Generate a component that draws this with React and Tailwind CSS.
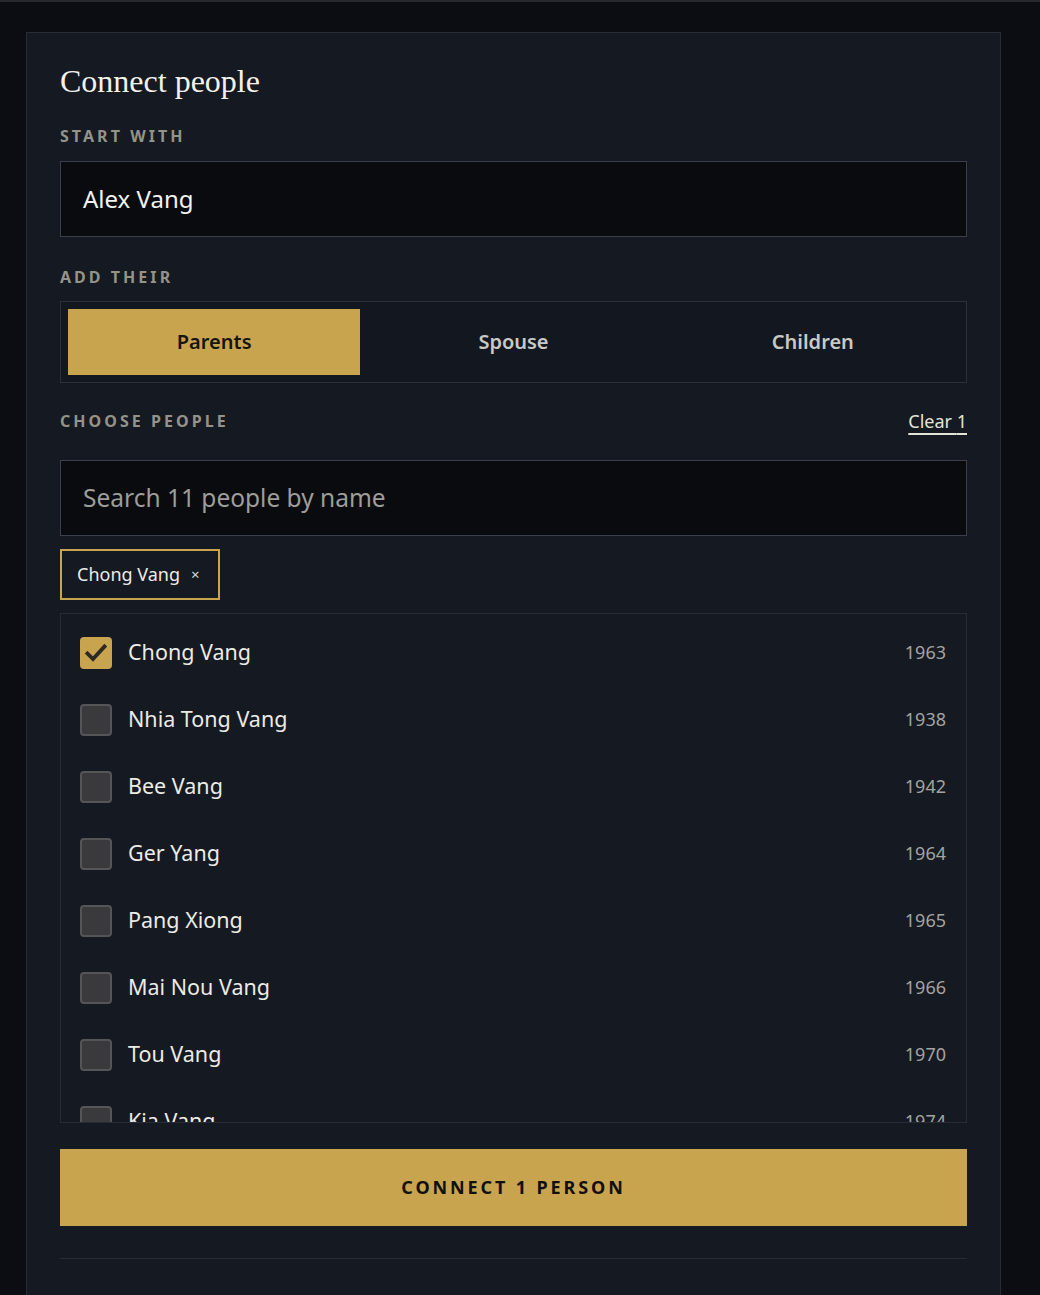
import { useState } from "react";

const people = [
    { name: "Chong Vang", year: 1963 },
    { name: "Nhia Tong Vang", year: 1938 },
    { name: "Bee Vang", year: 1942 },
    { name: "Ger Yang", year: 1964 },
    { name: "Pang Xiong", year: 1965 },
    { name: "Mai Nou Vang", year: 1966 },
    { name: "Tou Vang", year: 1970 },
    { name: "Kia Vang", year: 1974 },
    { name: "Yer Vang", year: 1976 },
];

const sans = "font-['Noto_Sans','Open_Sans',sans-serif]";

export default function App() {
    const [tab, setTab] = useState("Parents");
    const [picked, setPicked] = useState(["Chong Vang"]);

    const toggle = (name) =>
        setPicked((p) => (p.includes(name) ? p.filter((n) => n !== name) : [...p, name]));

    return (
        <div className={`min-h-[1295px] bg-[#0b0d13] border-t-2 border-[#26282d] pt-[30px] px-[26px] ${sans}`}>
            <div className="w-[975px] bg-[#151922] border border-[#272c36] border-b-0 px-[33px] pt-[28px] pb-[40px] min-h-[1263px]">
                <h1 className="font-['Liberation_Serif','DejaVu_Serif',serif] text-[32px] leading-[40px] text-[#f3f1ea]">
                    Connect people
                </h1>

                {/* start with */}
                <p className="mt-[23px] text-[16px] font-bold uppercase tracking-[0.19em] text-[#94938a] leading-[24px]">
                    Start with
                </p>
                <div className="mt-[13px] h-[76px] bg-[#0a0b0f] border border-[#3a404b] flex items-center px-[22px]">
                    <span className="text-[24px] text-[#f2f2ee]">Alex Vang</span>
                </div>

                {/* add their */}
                <p className="mt-[28px] text-[16px] font-bold uppercase tracking-[0.19em] text-[#94938a] leading-[24px]">
                    Add their
                </p>
                <div className="mt-[12px] border border-[#2b303a] bg-[#131720] p-[7px] grid grid-cols-3 gap-[7px]">
                    {["Parents", "Spouse", "Children"].map((t) => (
                        <button
                            key={t}
                            onClick={() => setTab(t)}
                            className={`h-[66px] text-[20px] font-semibold ${
                                tab === t ? "bg-[#c9a44f] text-[#16140f]" : "text-[#c9c9c4]"
                            }`}
                        >
                            {t}
                        </button>
                    ))}
                </div>

                {/* choose people */}
                <div className="mt-[26px] flex items-center justify-between">
                    <p className="text-[16px] font-bold uppercase tracking-[0.19em] text-[#94938a] leading-[24px]">
                        Choose people
                    </p>
                    <button
                        onClick={() => setPicked([])}
                        className="text-[18px] leading-[24px] text-[#e4e3d8] underline underline-offset-[5px] decoration-2"
                    >
                        Clear {picked.length}
                    </button>
                </div>
                <div className="mt-[27px] h-[76px] bg-[#0a0b0f] border border-[#3a404b] flex items-center px-[22px]">
                    <input
                        placeholder="Search 11 people by name"
                        className="w-full bg-transparent outline-none text-[24.5px] text-white placeholder:text-[#9d9d9a]"
                    />
                </div>

                {/* chips */}
                <div className="mt-[13px] flex gap-2 min-h-[51px]">
                    {picked.map((n) => (
                        <div key={n} className="h-[51px] border-2 border-[#c9a44f] flex items-center pl-[15px] pr-[18px] gap-[11px]">
                            <span className="text-[18px] text-[#ecebe4]">{n}</span>
                            <button onClick={() => toggle(n)} className="text-[15px] text-[#d8d8d2]">×</button>
                        </div>
                    ))}
                </div>

                {/* list */}
                <div className="mt-[13px] h-[510px] overflow-hidden border border-[#262b35] pt-[5px]">
                    {people.map((p) => {
                        const on = picked.includes(p.name);
                        return (
                            <div
                                key={p.name}
                                onClick={() => toggle(p.name)}
                                className="h-[67px] flex items-center pl-[19px] pr-[20px] cursor-pointer"
                            >
                                <div
                                    className={`w-[32px] h-[32px] rounded-[4px] flex items-center justify-center ${
                                        on ? "bg-[#c9a44f]" : "bg-[#3a3a3c] border-2 border-[#555558]"
                                    }`}
                                >
                                    {on && (
                                        <svg width="24" height="24" viewBox="0 0 24 24">
                                            <path d="M3.5 12.5 L9 18 L20.5 5.5" fill="none" stroke="#2c2a25" strokeWidth="3.8" strokeLinecap="square" />
                                        </svg>
                                    )}
                                </div>
                                <span className="ml-[16px] flex-1 text-[21.5px] text-[#ecebe4]">{p.name}</span>
                                <span className="text-[18px] text-[#a3a3a0]">{p.year}</span>
                            </div>
                        );
                    })}
                </div>

                <button className="mt-[26px] w-full h-[77px] bg-[#c9a44f] text-[18px] font-bold uppercase tracking-[0.16em] text-[#111010]">
                    Connect {picked.length} {picked.length === 1 ? "person" : "people"}
                </button>

                <div className="mt-[32px] border-t border-[#262b35]" />
            </div>
        </div>
    );
}
